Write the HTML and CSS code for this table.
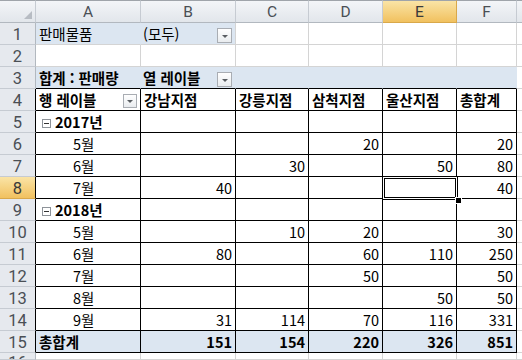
FILE: index.html
```html
<!DOCTYPE html>
<html lang="ko">
<head>
<meta charset="utf-8">
<link rel="stylesheet" href="styles.css">
</head>
<body>
<div class="sheet">
  <!-- column headers -->
  <div class="ch corner"><svg class="tri" width="8" height="8" viewBox="0 0 8 8"><polygon points="8,0 8,8 0,8" fill="#b7bcc3"/></svg></div>
  <div class="ch">A</div>
  <div class="ch">B</div>
  <div class="ch">C</div>
  <div class="ch">D</div>
  <div class="ch sel">E</div>
  <div class="ch">F</div>
  <div class="ch"></div>

  <!-- row 1 -->
  <div class="rh">1</div>
  <div class="c blue hide-r">판매물품</div>
  <div class="c blue pb">(모두)<span class="dd"></span></div>
  <div class="c"></div><div class="c"></div><div class="c"></div><div class="c"></div><div class="c"></div>

  <!-- row 2 -->
  <div class="rh">2</div>
  <div class="c"></div><div class="c"></div><div class="c"></div><div class="c"></div><div class="c"></div><div class="c"></div><div class="c"></div>

  <!-- row 3 -->
  <div class="rh">3</div>
  <div class="c blue hide-r bb b">합계 : 판매량</div>
  <div class="c blue hide-r bb b pb">열 레이블<span class="dd"></span></div>
  <div class="c blue hide-r bb"></div>
  <div class="c blue hide-r bb"></div>
  <div class="c blue hide-r bb"></div>
  <div class="c blue hide-r bb"></div>
  <div class="c"></div>

  <!-- row 4 -->
  <div class="rh pl">4</div>
  <div class="c pv b">행 레이블<span class="dd dd-a"></span></div>
  <div class="c pv b">강남지점</div>
  <div class="c pv b">강릉지점</div>
  <div class="c pv b">삼척지점</div>
  <div class="c pv b">울산지점</div>
  <div class="c pv b">총합계</div>
  <div class="c"></div>

  <!-- row 5 -->
  <div class="rh pl">5</div>
  <div class="c pv b grp"><span class="mbox"></span>2017년</div>
  <div class="c pv"></div><div class="c pv"></div><div class="c pv"></div><div class="c pv"></div><div class="c pv"></div>
  <div class="c"></div>

  <!-- row 6 -->
  <div class="rh pl">6</div>
  <div class="c pv ind">5월</div>
  <div class="c pv n"></div><div class="c pv n"></div><div class="c pv n">20</div><div class="c pv n"></div><div class="c pv n">20</div>
  <div class="c"></div>

  <!-- row 7 -->
  <div class="rh pl">7</div>
  <div class="c pv ind">6월</div>
  <div class="c pv n"></div><div class="c pv n">30</div><div class="c pv n"></div><div class="c pv n">50</div><div class="c pv n">80</div>
  <div class="c"></div>

  <!-- row 8 -->
  <div class="rh pl sel">8</div>
  <div class="c pv ind">7월</div>
  <div class="c pv n">40</div><div class="c pv n"></div><div class="c pv n"></div><div class="c pv n"></div><div class="c pv n">40</div>
  <div class="c"></div>

  <!-- row 9 -->
  <div class="rh pl">9</div>
  <div class="c pv b grp"><span class="mbox"></span>2018년</div>
  <div class="c pv"></div><div class="c pv"></div><div class="c pv"></div><div class="c pv"></div><div class="c pv"></div>
  <div class="c"></div>

  <!-- row 10 -->
  <div class="rh pl">10</div>
  <div class="c pv ind">5월</div>
  <div class="c pv n"></div><div class="c pv n">10</div><div class="c pv n">20</div><div class="c pv n"></div><div class="c pv n">30</div>
  <div class="c"></div>

  <!-- row 11 -->
  <div class="rh pl">11</div>
  <div class="c pv ind">6월</div>
  <div class="c pv n">80</div><div class="c pv n"></div><div class="c pv n">60</div><div class="c pv n">110</div><div class="c pv n">250</div>
  <div class="c"></div>

  <!-- row 12 -->
  <div class="rh pl">12</div>
  <div class="c pv ind">7월</div>
  <div class="c pv n"></div><div class="c pv n"></div><div class="c pv n">50</div><div class="c pv n"></div><div class="c pv n">50</div>
  <div class="c"></div>

  <!-- row 13 -->
  <div class="rh pl">13</div>
  <div class="c pv ind">8월</div>
  <div class="c pv n"></div><div class="c pv n"></div><div class="c pv n"></div><div class="c pv n">50</div><div class="c pv n">50</div>
  <div class="c"></div>

  <!-- row 14 -->
  <div class="rh pl">14</div>
  <div class="c pv ind">9월</div>
  <div class="c pv n">31</div><div class="c pv n">114</div><div class="c pv n">70</div><div class="c pv n">116</div><div class="c pv n">331</div>
  <div class="c"></div>

  <!-- row 15 -->
  <div class="rh pl">15</div>
  <div class="c pv blue b">총합계</div>
  <div class="c pv blue b n">151</div><div class="c pv blue b n">154</div><div class="c pv blue b n">220</div><div class="c pv blue b n">326</div><div class="c pv blue b n">851</div>
  <div class="c"></div>

  <!-- row 16 -->
  <div class="rh rh-last">16</div>
  <div class="c"></div><div class="c"></div><div class="c"></div><div class="c"></div><div class="c"></div><div class="c"></div><div class="c"></div>

  <div class="active"><span class="handle"></span></div>
</div>
</body>
</html>
```

FILE: styles.css
```css
html, body {
  margin: 0;
  padding: 0;
  background: #fff;
}
body {
  width: 522px;
  height: 360px;
  overflow: hidden;
  font-family: "Noto Sans CJK KR", "Malgun Gothic", sans-serif;
  color: #000;
}
.sheet {
  position: relative;
  display: grid;
  grid-template-columns: 36px 105px 95px 73px 74px 74px 60px 1fr;
  grid-template-rows: 23px repeat(15, 22px) 1fr;
  width: 522px;
  height: 360px;
}
.sheet > div {
  box-sizing: border-box;
  min-width: 0;
  overflow: hidden;
  white-space: nowrap;
}
.ch {
  background: linear-gradient(#f3f5f8, #e2e6eb);
  border-top: 1px solid #9fa4aa;
  border-right: 1px solid #c6cbd2;
  border-bottom: 1px solid #b2b8bf;
  color: #4a4f55;
  font-family: Roboto, "Liberation Sans", sans-serif;
  font-size: 15.5px;
  line-height: 17px;
  padding-top: 3px;
  text-align: center;
}
.ch.corner {
  position: relative;
  display: flex;
  align-items: flex-end;
  justify-content: flex-end;
  padding: 0 3px 3px 0;
}
.tri { display: block; }
.ch.sel {
  background: linear-gradient(#fae4a6, #f1c15f);
  border-right-color: #d9a84a;
  border-bottom-color: #d9a84a;
  color: #3a3a3a;
}
.rh {
  background: #e6e9ee;
  border-right: 1px solid #b2b8bf;
  border-bottom: 1px solid #c6cbd2;
  color: #4a4f55;
  font-family: Roboto, "Liberation Sans", sans-serif;
  font-size: 16.5px;
  line-height: 19px;
  padding-top: 2px;
  text-align: center;
}
.rh-last { padding-top: 1px; line-height: 18px; }
.rh.sel {
  background: linear-gradient(#fae4a6, #f1c15f);
  border-bottom-color: #d9a84a;
  color: #3a3a3a;
}
.rh.pl { border-right-color: #000; }
.c {
  border-right: 1px solid #d4d4d4;
  border-bottom: 1px solid #d4d4d4;
  font-size: 14.5px;
  line-height: 21px;
  padding: 0 3px 0 3px;
  display: flex;
  align-items: flex-end;
}
.blue { background: #dce6f1; }
.hide-r { border-right-color: #dce6f1; }
.bb { border-bottom-color: #000; }
.pv {
  border-right-color: #000;
  border-bottom-color: #000;
}
.b { font-weight: bold; }
.n { justify-content: flex-end; }
.pb { padding-left: 2px; }
.ind { padding-left: 37px; }
.grp { padding-left: 6px; }
.mbox {
  position: relative;
  align-self: center;
  width: 9px;
  height: 9px;
  box-sizing: border-box;
  border: 1px solid #8e9399;
  background: #fff;
  margin: 3px 4px 0 0;
  flex: none;
}
.mbox::after {
  content: "";
  position: absolute;
  left: 1px;
  top: 3px;
  width: 5px;
  height: 1px;
  background: #333;
}
.dd {
  position: relative;
  flex: none;
  margin-left: auto;
  margin-right: 0;
  margin-bottom: 1px;
  width: 15px;
  height: 15px;
  box-sizing: border-box;
  border: 1px solid #a9adb3;
  background: linear-gradient(#ffffff, #e9ecef);
}
.dd-a {
  width: 14px;
  height: 14px;
  margin-bottom: 2px;
}
.dd::after {
  content: "";
  position: absolute;
  left: 50%;
  top: 50%;
  margin-left: -3px;
  margin-top: -1px;
  border-left: 3px solid transparent;
  border-right: 3px solid transparent;
  border-top: 3px solid #5a5e63;
}
.active {
  position: absolute;
  left: 382px;
  top: 176px;
  width: 76px;
  height: 24px;
  box-sizing: border-box;
  border: 1px solid #000;
  box-shadow: inset 0 0 0 1px #fff, inset 0 0 0 2px #000;
  overflow: visible !important;
}
.handle {
  position: absolute;
  right: -4px;
  bottom: -4px;
  width: 5px;
  height: 5px;
  background: #000;
  outline: 1px solid #fff;
}
```
